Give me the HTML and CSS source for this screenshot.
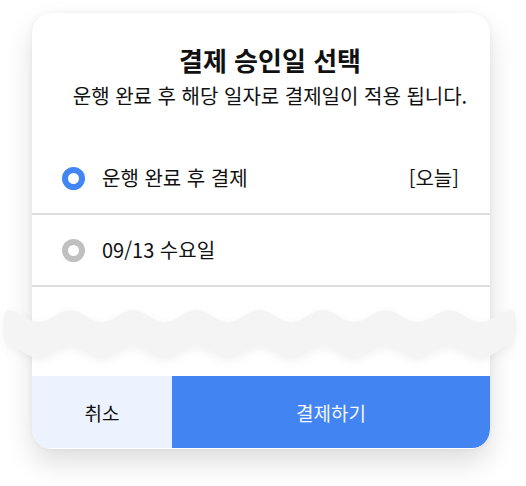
FILE: index.html
```html
<!DOCTYPE html>
<html lang="ko">
<head>
<meta charset="utf-8">
<link rel="stylesheet" href="styles.css">
</head>
<body>
<div class="stage">
  <div class="card">
    <div class="head">
      <h1 class="title">결제 승인일 선택</h1>
      <p class="sub">운행 완료 후 해당 일자로 결제일이 적용 됩니다.</p>
    </div>
    <div class="row">
      <span class="radio on"></span>
      <span class="label">운행 완료 후 결제</span>
      <span class="tag">[오늘]</span>
    </div>
    <div class="row">
      <span class="radio"></span>
      <span class="label">09/13 수요일</span>
    </div>
    <div class="blank"></div>
    <div class="actions">
      <button class="btn cancel">취소</button>
      <button class="btn pay">결제하기</button>
    </div>
  </div>
  <svg class="wave" width="526" height="70" viewBox="0 0 526 70">
    <path d="M7,10 c11.36,0 20.2,12 31.56,12 c11.36,0 20.2,-12 31.56,-12 c11.36,0 20.2,12 31.56,12 c11.36,0 20.2,-12 31.56,-12 c11.36,0 20.2,12 31.56,12 c11.36,0 20.2,-12 31.56,-12 c11.36,0 20.2,12 31.56,12 c11.36,0 20.2,-12 31.56,-12 c11.36,0 20.2,12 31.56,12 c11.36,0 20.2,-12 31.56,-12 c11.36,0 20.2,12 31.56,12 c11.36,0 20.2,-12 31.56,-12 c11.36,0 20.2,12 31.56,12 c11.36,0 20.2,-12 31.56,-12 c11.36,0 20.2,12 31.56,12 c11.36,0 20.2,-12 31.56,-12 C517,10 518,36 512,46 c-11.36,0 -20.2,12 -31.56,12 c-11.36,0 -20.2,-12 -31.56,-12 c-11.36,0 -20.2,12 -31.56,12 c-11.36,0 -20.2,-12 -31.56,-12 c-11.36,0 -20.2,12 -31.56,12 c-11.36,0 -20.2,-12 -31.56,-12 c-11.36,0 -20.2,12 -31.56,12 c-11.36,0 -20.2,-12 -31.56,-12 c-11.36,0 -20.2,12 -31.56,12 c-11.36,0 -20.2,-12 -31.56,-12 c-11.36,0 -20.2,12 -31.56,12 c-11.36,0 -20.2,-12 -31.56,-12 c-11.36,0 -20.2,12 -31.56,12 c-11.36,0 -20.2,-12 -31.56,-12 c-11.36,0 -20.2,12 -31.56,12 c-11.36,0 -20.2,-12 -31.56,-12 C2,40 2,14 7,10 Z" fill="#f4f4f4"/>
  </svg>
</div>
</body>
</html>
```
FILE: styles.css
```css
* { box-sizing: border-box; }
html, body { margin: 0; background: #fff; }
body {
  font-family: "Noto Sans CJK KR", "Noto Sans", sans-serif;
  color: #111;
}
.stage {
  position: relative;
  width: 526px;
  height: 486px;
  padding: 13px 36px 0 32px;
}
.card {
  width: 458px;
  background: #fff;
  border-radius: 20px;
  box-shadow: 0 14px 28px rgba(0,0,0,0.13), 0 0 6px rgba(0,0,0,0.05);
  overflow: hidden;
  display: flex;
  flex-direction: column;
  padding-bottom: 1px;
}
.head {
  padding: 29px 0 0 18px;
  height: 130px;
  text-align: center;
}
.title {
  margin: 0;
  font-size: 26px;
  line-height: 36px;
  font-weight: 700;
}
.sub {
  margin: 5px 0 0;
  font-size: 20px;
  line-height: 26px;
  font-weight: 400;
}
.row {
  height: 72px;
  border-bottom: 2px solid #dedede;
  display: flex;
  align-items: center;
  padding: 0 31px 0 30px;
}
.radio {
  width: 23px;
  height: 23px;
  border-radius: 50%;
  border: 6px solid #c0c0c0;
  background: #fff;
  flex: none;
}
.radio.on { border-color: #4285f4; }
.label {
  margin-left: 17px;
  font-size: 20px;
  line-height: 28px;
  flex: 1;
}
.tag {
  font-size: 20px;
  line-height: 28px;
}
.blank { height: 89px; }
.actions {
  display: flex;
  height: 72px;
}
.btn {
  border: 0;
  margin: 0;
  font-family: inherit;
  font-size: 19px;
  height: 100%;
}
.cancel {
  width: 140px;
  background: #edf3fe;
  color: #111;
}
.pay {
  flex: 1;
  background: #4284f2;
  color: #f4f7fe;
  border-bottom-right-radius: 18px;
}
.wave {
  position: absolute;
  left: 0;
  top: 300px;
  filter: drop-shadow(0 3px 4px rgba(0,0,0,0.05));
}
```
